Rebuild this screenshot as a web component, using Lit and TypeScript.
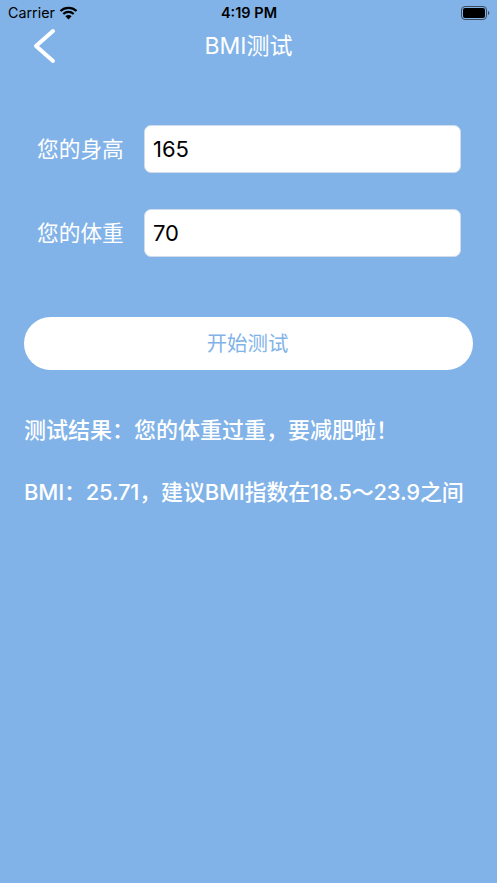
import { LitElement, html, css } from "lit";
import { customElement } from "lit/decorators.js";

@customElement("app-root")
export class AppRoot extends LitElement {
  static styles = css`
    :host {
      display: block;
      width: 497px;
      height: 883px;
      background: #81b3e8;
      font-family: Inter, "Noto Sans CJK SC", sans-serif;
      color: #fff;
      overflow: hidden;
    }
    .status {
      height: 25px;
      display: grid;
      grid-template-columns: 1fr auto 1fr;
      align-items: center;
      padding: 0 7px 0 8px;
      color: #000;
      font-size: 14.3px;
    }
    .status-left { display: flex; align-items: center; gap: 4px; }
    .status-left svg { display: block; }
    .time { font-weight: 600; font-size: 14.5px; }
    .status-right { display: flex; justify-content: flex-end; }
    .nav {
      height: 42px;
      display: grid;
      grid-template-columns: 1fr auto 1fr;
      align-items: center;
      font-size: 23px;
    }
    .back { padding-left: 33px; }
    .back svg { display: block; }
    .title { padding-bottom: 4px; }
    .form {
      margin-top: 58px;
      padding: 0 36px 0 37px;
      display: flex;
      flex-direction: column;
      gap: 36px;
    }
    .row { display: flex; align-items: center; gap: 20px; }
    .label { font-size: 21.7px; width: 87px; white-space: nowrap; padding-bottom: 3px; }
    .field {
      flex: 1;
      height: 48px;
      box-sizing: border-box;
      background: #fff;
      border-radius: 7px;
      border: 1px solid #d0dcea;
      color: #000;
      font-size: 22px;
      padding-left: 8px;
      display: flex;
      align-items: center;
    }
    .btn {
      margin: 60px 24px 0;
      height: 53px;
      box-sizing: border-box;
      padding: 0 2px 3px 0;
      border-radius: 27px;
      background: #fff;
      color: #81b3e8;
      font-size: 20.4px;
      display: flex;
      align-items: center;
      justify-content: center;
    }
    .result {
      margin: 45px 24px 0;
      display: flex;
      flex-direction: column;
      gap: 32px;
      font-size: 22px;
      font-weight: 500;
      line-height: 30px;
      white-space: nowrap;
    }
    .tight { letter-spacing: -0.2px; }
  `;

  render() {
    return html`
      <div class="status">
        <div class="status-left">
          <span>Carrier</span>
          <svg width="19" height="14" viewBox="0 0 19 14">
            <path d="M9.5 13.6 6.4 10.2a4.4 4.4 0 0 1 6.2 0Z" fill="#000" />
            <path d="M4.3 8a7.6 7.6 0 0 1 10.4 0" fill="none" stroke="#000" stroke-width="2.2" />
            <path d="M1.5 5a11.7 11.7 0 0 1 16 0" fill="none" stroke="#000" stroke-width="2.2" />
          </svg>
        </div>
        <span class="time">4:19 PM</span>
        <div class="status-right">
          <svg width="29" height="14" viewBox="0 0 29 14">
            <rect x="0.5" y="0.5" width="25" height="13" rx="3.5" fill="none" stroke="#3b4a5c" />
            <rect x="2" y="2" width="22" height="10" rx="2" fill="#000" />
            <path d="M27 5v4c.8-.3 1.3-1 1.3-2s-.5-1.7-1.3-2Z" fill="#3b4a5c" />
          </svg>
        </div>
      </div>
      <div class="nav">
        <div class="back">
          <svg width="24" height="36" viewBox="0 0 24 36">
            <path d="M20 3 3 18l17 15" fill="none" stroke="#fff" stroke-width="4" stroke-linecap="round" stroke-linejoin="round" />
          </svg>
        </div>
        <span class="title">BMI测试</span>
        <span></span>
      </div>
      <div class="form">
        <div class="row"><span class="label">您的身高</span><div class="field">165</div></div>
        <div class="row"><span class="label">您的体重</span><div class="field">70</div></div>
      </div>
      <div class="btn">开始测试</div>
      <div class="result">
        <span>测试结果：您的体重过重，要减肥啦！</span>
        <span class="tight">BMI：25.71，建议BMI指数在18.5～23.9之间</span>
      </div>
    `;
  }
}
